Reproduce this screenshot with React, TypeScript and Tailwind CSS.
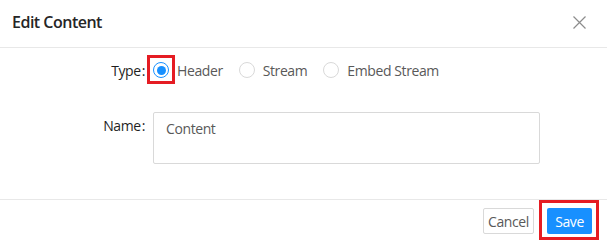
import React from "react";

function Radio({ checked, label, highlight }: { checked?: boolean; label: string; highlight?: boolean }) {
  return (
    <label className="flex items-center mr-2 cursor-pointer">
      <span className="relative flex items-center justify-center">
        <span
          className={
            checked
              ? "w-4 h-4 rounded-full border border-[#1890ff] bg-white flex items-center justify-center"
              : "w-4 h-4 rounded-full border border-[#d9d9d9] bg-white"
          }
        >
          {checked && <span className="w-[9px] h-[9px] rounded-full bg-[#1890ff]" />}
        </span>
        {highlight && (
          <span className="absolute -left-[6px] -top-[7px] w-[28px] h-[29px] border-[3px] border-[#e51c23]" />
        )}
      </span>
      <span className="px-2 text-[14px] tracking-[-0.4px] text-[#595959]">{label}</span>
    </label>
  );
}

function Label({ text, className }: { text: string; className?: string }) {
  return (
    <div className={"w-[145px] flex justify-end text-[14px] tracking-[-0.4px] text-[#1f1f1f] " + (className ?? "")}>
      <span>{text}</span>
      <span className="ml-[1px]">:</span>
    </div>
  );
}

export default function App() {
  return (
    <div
      className="w-[607px] h-[241px] bg-white flex flex-col"
      style={{ fontFamily: '"Open Sans", "Noto Sans", sans-serif' }}
    >
      <div className="h-[48px] shrink-0 border-b border-[#e8e8e8] flex items-center justify-between pl-3 pr-[21px]">
        <div className="text-[16px] font-semibold tracking-[-0.5px] text-[#262626] leading-none -mt-[3px]">Edit Content</div>
        <svg width="13" height="13" viewBox="0 0 13 13" className="text-[#8c8c8c] -mt-[3px]">
          <path d="M0.5 0.5 L12.5 12.5 M12.5 0.5 L0.5 12.5" stroke="currentColor" strokeWidth="1.2" fill="none" />
        </svg>
      </div>
      <div className="shrink-0 flex flex-col pt-[6px] pb-[35px] border-b border-[#e8e8e8]">
        <div className="flex items-center h-8">
          <Label text="Type" />
          <div className="ml-2 flex items-center">
            <Radio checked label="Header" highlight />
            <Radio label="Stream" />
            <Radio label="Embed Stream" />
          </div>
        </div>
        <div className="flex mt-[26px]">
          <Label text="Name" className="pt-[3px]" />
          <div className="ml-2 w-[387px] h-[52px] border border-[#d9d9d9] rounded-[2px] px-3 pt-[5px] text-[14px] tracking-[-0.4px] text-[#595959]">
            Content
          </div>
        </div>
      </div>
      <div className="flex justify-end items-start pt-2 pr-[15px] gap-[13px]">
        <button className="h-[26px] w-[51px] border border-[#d9d9d9] rounded-[2px] bg-white text-[14px] tracking-[-0.4px] text-[#595959]">
          Cancel
        </button>
        <span className="relative flex">
          <button className="h-[26px] w-[45px] rounded-[2px] bg-[#1890ff] text-[14px] tracking-[-0.4px] text-white">Save</button>
          <span className="absolute -left-[8px] -top-[8px] w-[60px] h-[40px] border-[3px] border-[#e51c23]" />
        </span>
      </div>
    </div>
  );
}
